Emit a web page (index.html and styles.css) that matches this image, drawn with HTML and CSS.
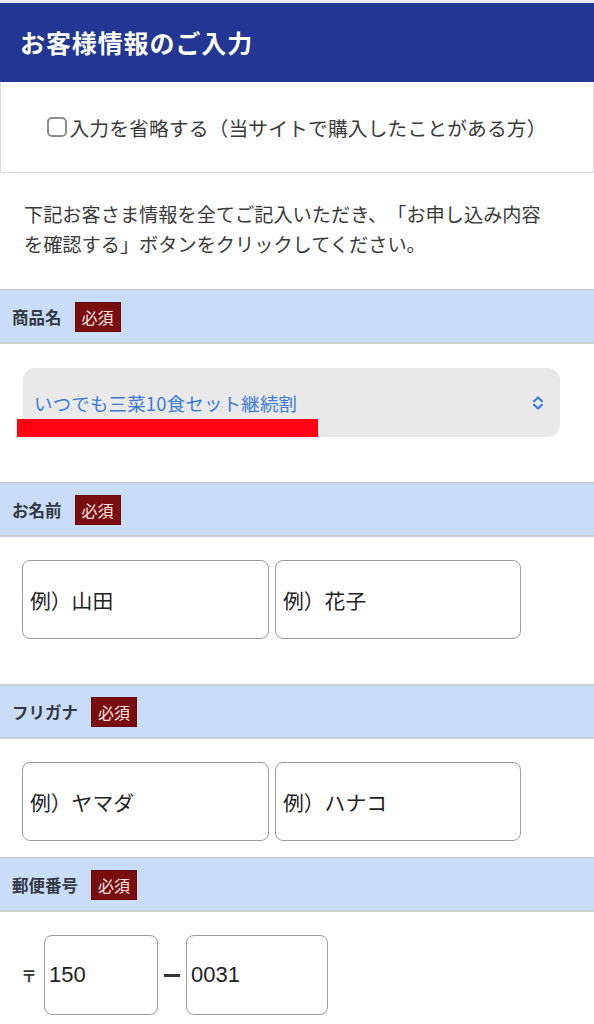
FILE: index.html
```html
<!DOCTYPE html>
<html lang="ja">
<head>
<meta charset="utf-8">
<title>お客様情報のご入力</title>
<link rel="stylesheet" href="styles.css">
</head>
<body>
<div class="page">
  <div class="topline"></div>
  <h1 class="title">お客様情報のご入力</h1>
  <div class="skip">
    <label class="skip-label"><span class="checkbox"></span>入力を省略する（当サイトで購入したことがある方）</label>
  </div>
  <p class="intro">下記お客さま情報を全てご記入いただき、「お申し込み内容<br>を確認する」ボタンをクリックしてください。</p>

  <div class="band"><span class="band-label">商品名</span><span class="badge">必須</span></div>
  <div class="field field-select">
    <div class="select">
      <span class="select-text">いつでも三菜10食セット継続割</span>
      <svg class="chevron" width="12" height="16" viewBox="0 0 12 16" aria-hidden="true">
        <path d="M2 6.2 L6 2.5 L10 6.2" fill="none" stroke="#3a7ad8" stroke-width="2.2" stroke-linecap="round" stroke-linejoin="round"/>
        <path d="M2 9.8 L6 13.5 L10 9.8" fill="none" stroke="#3a7ad8" stroke-width="2.2" stroke-linecap="round" stroke-linejoin="round"/>
      </svg>
      <span class="redact"></span>
    </div>
  </div>

  <div class="band"><span class="band-label">お名前</span><span class="badge">必須</span></div>
  <div class="field field-pair">
    <input class="text-input wide" type="text" placeholder="例）山田">
    <input class="text-input wide2" type="text" placeholder="例）花子">
  </div>

  <div class="band"><span class="band-label">フリガナ</span><span class="badge">必須</span></div>
  <div class="field field-pair tight">
    <input class="text-input wide" type="text" placeholder="例）ヤマダ">
    <input class="text-input wide2" type="text" placeholder="例）ハナコ">
  </div>

  <div class="band"><span class="band-label">郵便番号</span><span class="badge">必須</span></div>
  <div class="field field-zip">
    <span class="zip-mark">〒</span>
    <input class="text-input zip1" type="text" value="150">
    <span class="zip-dash"></span>
    <input class="text-input zip2" type="text" value="0031">
  </div>
</div>
</body>
</html>
```

FILE: styles.css
```css
* { box-sizing: border-box; }

html, body {
  margin: 0;
  padding: 0;
  background: #ffffff;
}

body {
  font-family: "Noto Sans CJK JP", "Noto Sans", sans-serif;
  color: #333333;
  text-spacing-trim: space-all;
}

.page {
  width: 594px;
  overflow: hidden;
}

.topline {
  height: 3px;
  background: #e8ebf2;
}

.title {
  margin: 0;
  height: 79px;
  background: #213793;
  color: #ffffff;
  font-size: 25px;
  font-weight: 700;
  letter-spacing: 0.9px;
  display: flex;
  align-items: center;
  padding-left: 20px;
  padding-bottom: 2px;
}

.skip {
  height: 91px;
  border: 1.5px solid #d7dce6;
  border-top: none;
  display: flex;
  align-items: center;
  justify-content: center;
}

.skip-label {
  display: flex;
  align-items: center;
  font-size: 19.8px;
  color: #3a3a3a;
  letter-spacing: 0.1px;
}

.checkbox {
  width: 20px;
  height: 20px;
  border: 2px solid #8d8d8d;
  border-radius: 5px;
  margin-right: 2px;
  background: #ffffff;
}

.intro {
  margin: 26px 0 30px 0;
  padding: 0 0 0 24px;
  font-size: 19.2px;
  line-height: 30px;
  white-space: nowrap;
  color: #3a3a3a;
}

.band {
  height: 55px;
  background: #c9ddf9;
  border-top: 2px solid #c9ced7;
  border-bottom: 2px solid #c9ced7;
  display: flex;
  align-items: center;
  padding-left: 12px;
}

.band-label {
  font-size: 16.5px;
  font-weight: 700;
  color: #333a45;
}

.badge {
  margin-left: 13px;
  height: 30px;
  padding: 0 6px;
  background: #7a0e0e;
  color: #f6e2e2;
  font-size: 16px;
  display: flex;
  align-items: center;
  border: 1px solid #6a0a0a;
}

.field-select {
  padding: 24px 34px 45px 23px;
}

.select {
  position: relative;
  height: 69px;
  background: #e9e9ea;
  border-radius: 12px;
  display: flex;
  align-items: center;
  justify-content: space-between;
  padding: 0 16px 0 11px;
}

.select-text {
  color: #3a7ad8;
  font-size: 18.4px;
  letter-spacing: 0.25px;
}

.chevron {
  display: block;
}

.redact {
  position: absolute;
  left: -6px;
  top: 51px;
  width: 301px;
  height: 18px;
  background: #ff0313;
}

.field-pair {
  display: flex;
  gap: 6px;
  padding: 23px 0 45px 22px;
}

.field-pair.tight {
  padding-bottom: 16px;
}

.text-input {
  height: 79px;
  border: 1.5px solid #9c9c9c;
  border-radius: 8px;
  background: #ffffff;
  font-family: "Noto Sans CJK JP", sans-serif;
  font-size: 20.8px;
  color: #222222;
  padding: 0 0 0 7px;
  margin: 0;
  outline: none;
}

.text-input::placeholder {
  color: #222222;
  opacity: 1;
}

.wide { width: 247px; }
.wide2 { width: 246px; }

.field-zip {
  display: flex;
  align-items: center;
  padding: 23px 0 0 21px;
}

.zip-mark {
  width: 23px;
  font-size: 16px;
  font-weight: 700;
  color: #333333;
}

.zip1,
.zip2 {
  height: 80px;
  font-family: "Liberation Sans", "Noto Sans CJK JP", sans-serif;
  font-size: 22px;
  padding-left: 4px;
}

.zip1 { width: 114px; }
.zip2 { width: 142px; }

.zip-dash {
  width: 16px;
  height: 3px;
  background: #333333;
  margin: 0 6px;
}
```
